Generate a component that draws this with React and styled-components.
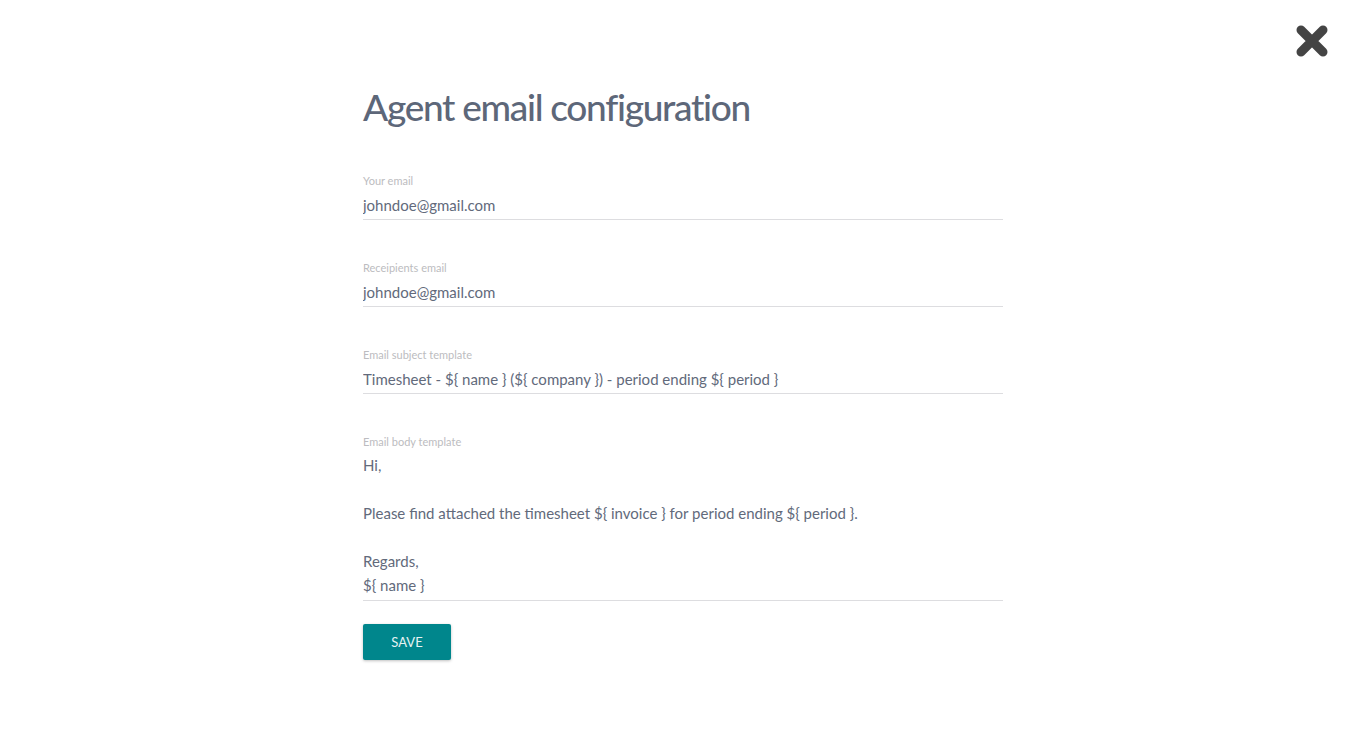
import React from 'react'
import styled, { createGlobalStyle } from 'styled-components'

const GlobalStyle = createGlobalStyle`
  body {
    margin: 0;
    background: #ffffff;
    font-family: Lato, "Open Sans", sans-serif;
  }
`

const fields = [
  { label: 'Your email', value: 'johndoe@gmail.com' },
  { label: 'Receipients email', value: 'johndoe@gmail.com' },
  { label: 'Email subject template', value: 'Timesheet - ${ name } (${ company }) - period ending ${ period }' },
]

const body = 'Hi,\n\nPlease find attached the timesheet ${ invoice } for period ending ${ period }.\n\nRegards,\n${ name }'

const App = () => {
  return (
    <Page>
      <GlobalStyle />
      <CloseButton aria-label="close">
        <svg width="34" height="34" viewBox="0 0 34 34">
          <path d="M6 6 L28 28 M28 6 L6 28" stroke="#444" strokeWidth="9" strokeLinecap="round" />
        </svg>
      </CloseButton>
      <Form>
        <Title>Agent email configuration</Title>
        {fields.map((f) => (
          <Field key={f.label}>
            <Label>{f.label}</Label>
            <Input defaultValue={f.value} />
          </Field>
        ))}
        <Field>
          <Label>Email body template</Label>
          <Body defaultValue={body} rows={6} />
        </Field>
        <SaveButton>SAVE</SaveButton>
      </Form>
    </Page>
  )
}

const Page = styled.div`
  position: relative;
  min-height: 738px;
  display: flex;
  justify-content: center;
`

const CloseButton = styled.button`
  position: absolute;
  top: 24px;
  right: 37px;
  padding: 0;
  border: 0;
  background: none;
  cursor: pointer;
  line-height: 0;
`

const Form = styled.div`
  width: 640px;
  padding-top: 84px;
`

const Title = styled.h1`
  margin: 0 0 44px;
  font-size: 37px;
  font-weight: 500;
  color: #5d6779;
  letter-spacing: -1.3px;
  line-height: 46px;
`

const Field = styled.div`
  display: flex;
  flex-direction: column;
  margin-bottom: 41px;

  &:last-of-type {
    margin-bottom: 23px;
  }
`

const Label = styled.label`
  font-size: 11px;
  line-height: 14px;
  color: #bcbcc0;
`

const Input = styled.input`
  border: 0;
  border-bottom: 1px solid #dddde0;
  padding: 7px 0 4px;
  font-family: inherit;
  font-size: 15px;
  line-height: 20px;
  color: #626a7b;
  outline: none;
`

const Body = styled.textarea`
  border: 0;
  border-bottom: 1px solid #dddde0;
  padding: 4px 0 3px;
  font-family: inherit;
  font-size: 15px;
  line-height: 24px;
  color: #626a7b;
  resize: none;
  outline: none;
  overflow: hidden;
`

const SaveButton = styled.button`
  width: 88px;
  height: 36px;
  border: 0;
  border-radius: 2px;
  background: #00868c;
  color: #e6f3f3;
  font-family: inherit;
  font-size: 13px;
  box-shadow: 0 1px 3px rgba(0, 0, 0, 0.25);
  cursor: pointer;
`

export default App
